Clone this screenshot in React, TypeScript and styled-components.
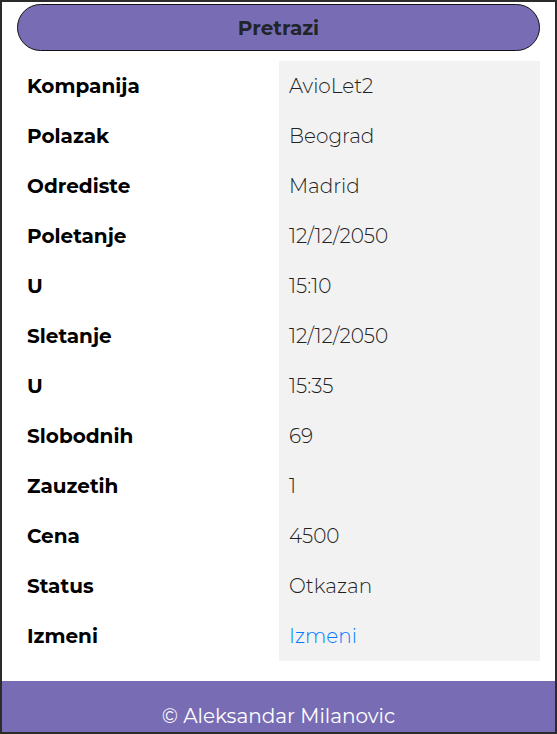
import React from "react";
import styled, { createGlobalStyle } from "styled-components";

const Global = createGlobalStyle`
  html, body { margin: 0; padding: 0; }
  body { font-family: "Montserrat", "DejaVu Sans", "Noto Sans", sans-serif; background: #fff; }
`;

const Frame = styled.div`
  box-sizing: border-box;
  width: 557px;
  height: 734px;
  border: 2px solid #2b2b2b;
  overflow: hidden;
  display: flex;
  flex-direction: column;
`;

const SearchButton = styled.button`
  flex-shrink: 0;
  margin: 2px 15px 0 15px;
  height: 47px;
  border: 1px solid #111;
  border-radius: 24px;
  background: #786db5;
  color: #212529;
  font-family: inherit;
  font-weight: 700;
  font-size: 20px;
  cursor: pointer;
`;

const Table = styled.div`
  flex-shrink: 0;
  margin: 10px 15px 0 15px;
  display: grid;
  grid-template-columns: 262px 261px;
`;

const Label = styled.div`
  height: 50px;
  display: flex;
  align-items: center;
  padding-left: 10px;
  font-weight: 700;
  font-size: 20px;
  color: #000;
`;

const Value = styled.div<{ $link?: boolean }>`
  height: 50px;
  display: flex;
  align-items: center;
  padding-left: 10px;
  background: #f2f2f2;
  font-size: 20px;
  font-weight: 300;
  color: ${(p) => (p.$link ? "#007bff" : "#222")};
`;

const Footer = styled.footer`
  flex-shrink: 0;
  margin-top: 20px;
  background: #786db5;
  color: #fff;
  text-align: center;
  font-size: 20px;
  font-weight: 400;
  padding-top: 23px;
  height: 80px;
`;

const rows: [string, string, boolean?][] = [
  ["Kompanija", "AvioLet2"],
  ["Polazak", "Beograd"],
  ["Odrediste", "Madrid"],
  ["Poletanje", "12/12/2050"],
  ["U", "15:10"],
  ["Sletanje", "12/12/2050"],
  ["U", "15:35"],
  ["Slobodnih", "69"],
  ["Zauzetih", "1"],
  ["Cena", "4500"],
  ["Status", "Otkazan"],
  ["Izmeni", "Izmeni", true],
];

export default function App() {
  return (
    <>
      <Global />
      <Frame>
        <SearchButton>Pretrazi</SearchButton>
        <Table>
          {rows.map(([l, v, link], i) => (
            <React.Fragment key={i}>
              <Label>{l}</Label>
              <Value $link={link}>{v}</Value>
            </React.Fragment>
          ))}
        </Table>
        <Footer>© Aleksandar Milanovic</Footer>
      </Frame>
    </>
  );
}
